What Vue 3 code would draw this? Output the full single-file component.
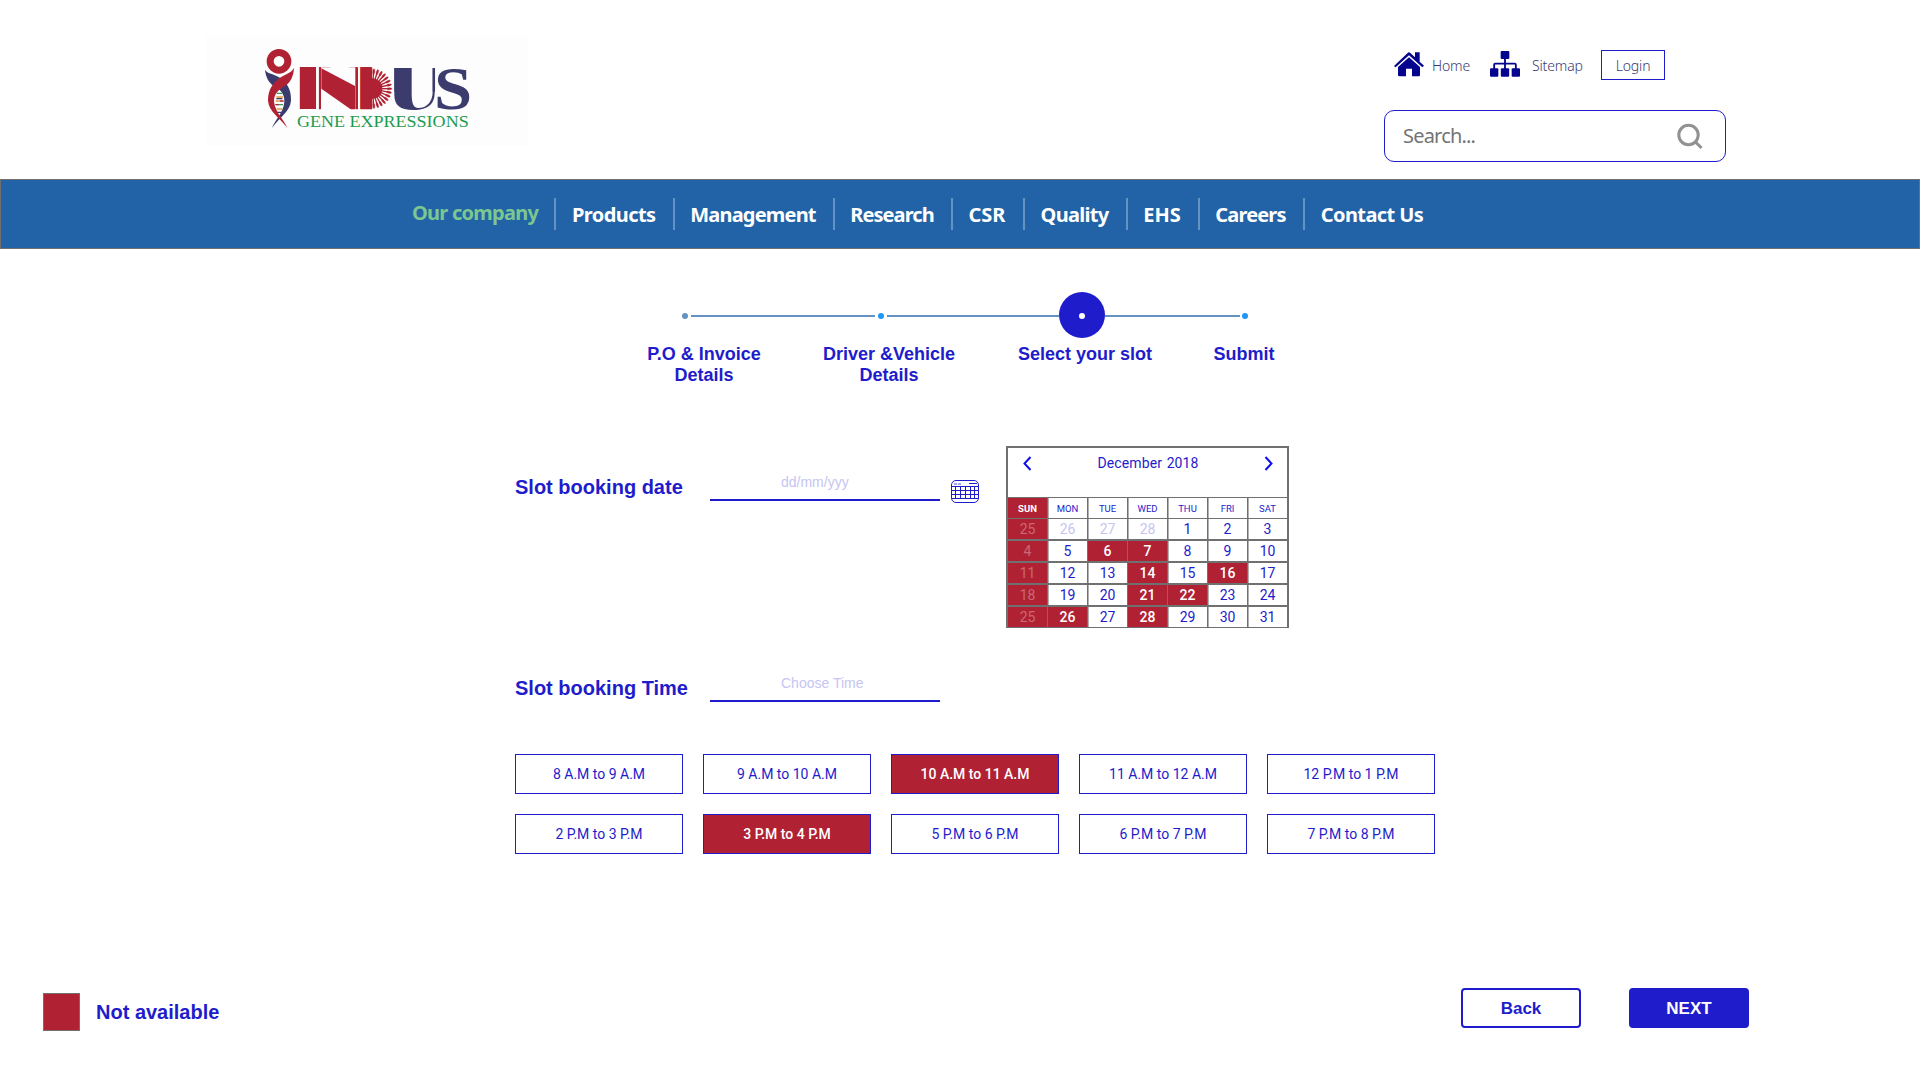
<script setup>
const rays = Array.from({ length: 15 }, (_, i) => -84 + i * 12)

const navItems = [
  { label: 'Products', width: 117.5, spacing: -0.56 },
  { label: 'Management', width: 159, spacing: -0.8 },
  { label: 'Research', width: 117, spacing: -0.9 },
  { label: 'CSR', width: 71, spacing: 0 },
  { label: 'Quality', width: 102, spacing: -0.7 },
  { label: 'EHS', width: 71, spacing: 0 },
  { label: 'Careers', width: 104, spacing: -0.85 },
  { label: 'Contact Us', width: 137, spacing: -0.6 },
]

const weekdays = ['SUN', 'MON', 'TUE', 'WED', 'THU', 'FRI', 'SAT']
const weeks = [
  [25, 26, 27, 28, 1, 2, 3],
  [4, 5, 6, 7, 8, 9, 10],
  [11, 12, 13, 14, 15, 16, 17],
  [18, 19, 20, 21, 22, 23, 24],
  [25, 26, 27, 28, 29, 30, 31],
]
const booked = [[], [2, 3], [3, 5], [3, 4], [1, 3]]

const dayClass = (row, col) => ({
  sunday: col === 0,
  booked: booked[row].includes(col),
  outside: row === 0 && col > 0 && col < 4,
})

const slots = [
  { label: '8 A.M to 9 A.M' },
  { label: '9 A.M to 10 A.M' },
  { label: '10 A.M to 11 A.M', taken: true },
  { label: '11 A.M to 12 A.M' },
  { label: '12 P.M to 1 P.M' },
  { label: '2 P.M to 3 P.M' },
  { label: '3 P.M to 4 P.M', taken: true },
  { label: '5 P.M to 6 P.M' },
  { label: '6 P.M to 7 P.M' },
  { label: '7 P.M to 8 P.M' },
]
</script>

<template>
  <div class="page">
    <header class="header">
      <svg class="logo" viewBox="18 18 966 330">
        <circle cx="237" cy="94" r="26.5" fill="none" stroke="#b02233" stroke-width="21" />
        <path fill="#3b3b6e" d="M195 119C205 135 228 130 245 148C268 165 274 190 273 212C270 245 238 262 216 294C225 268 250 250 253 215C254 190 240 178 222 168C205 158 197 140 195 119Z" />
        <path fill="#b02233" d="M282 113C274 132 250 132 232 150C210 168 204 190 204 212C207 245 238 262 262 294C252 268 227 250 222 215C222 190 236 180 254 168C272 158 281 138 282 113Z" />
        <g stroke-width="4">
          <path stroke="#3b9a5a" d="M230 190H247M229 224H249" />
          <path stroke="#e39a3b" d="M229 201H249M227 213H240M230 237H247" />
          <path stroke="#b02233" d="M240 213H251M226 224H236" />
          <path stroke="#3b3b6e" d="M232 247H244M229 206H247" />
        </g>
        <g class="mark-red">
          <text transform="translate(276.500 238) scale(1.86 1)">I</text>
          <text transform="translate(343.500 238) scale(1.085 1)">N</text>
          <text transform="translate(474 238) scale(.56 1)">D</text>
        </g>
        <path d="M363 112H466V240H363Z" fill="#fdfdfd" />
        <path d="M364 115L465 168V238H452L364 176Z" fill="#b02233" />
        <path d="M357 113H362V238H357ZM468 113H474V238H468ZM482 113H516V238H482Z" fill="#b02233" />
        <path d="M517 108H552V244H517Z" fill="#fdfdfd" />
        <path d="M516 145A31 31 0 0 1 516 207Z" fill="#b02233" />
        <g stroke="#b02233" fill="#b02233">
          <g v-for="a in rays" :key="a" :transform="`rotate(${a} 516 176)`">
            <path d="M540 176H570" stroke-width="4" />
            <ellipse cx="568" cy="176" rx="8" ry="3" />
          </g>
        </g>
        <g class="mark-blue">
          <text transform="translate(570.500 237) scale(1.13 1)">U</text>
          <path d="M578 185H710V244H578ZM635 108H698V200H635Z" fill="#fdfdfd" />
          <path d="M583 114H635V190C635 225 642 234 655 234C680 234 698 215 698 185V114H704V188C704 218 688 240 640 240C600 240 583 225 583 195Z" />
          <text class="serif" transform="translate(702 236) scale(1.1 1)">S</text>
        </g>
        <text class="tagline" x="291" y="292" textLength="515" lengthAdjust="spacingAndGlyphs">GENE EXPRESSIONS</text>
      </svg>

      <div class="tools">
        <div class="links">
          <a class="link home">
            <svg width="30" height="25" viewBox="72 50 90 75" fill="#04048e">
              <path d="M72 92L113 53Q117 49 121 53L135 66V51H149V79L162 91L157 96L117 60L77 96Z" />
              <path d="M117 66L150 95V120Q150 123 147 123H126V100H108V123H88Q84 123 84 119V95Z" />
            </svg>
            <span>Home</span>
          </a>
          <a class="link sitemap">
            <svg width="30" height="26" viewBox="360 48 90 78" fill="#04048e">
              <rect x="392" y="48" width="26" height="24" rx="3" />
              <rect x="360" y="100" width="25" height="25" rx="3" />
              <rect x="392.500" y="100" width="25" height="25" rx="3" />
              <rect x="425" y="100" width="25" height="25" rx="3" />
              <path d="M372.500 102V89Q372.500 86 375.500 86H434.500Q437.500 86 437.500 89V102M405 70V102" fill="none" stroke="#04048e" stroke-width="5.500" />
            </svg>
            <span>Sitemap</span>
          </a>
          <a class="login">Login</a>
        </div>
        <div class="search">
          <span>Search...</span>
          <svg width="26" height="27" viewBox="0 0 26 27" fill="none" stroke="#919191" stroke-width="3">
            <circle cx="11.500" cy="12" r="9.700" />
            <path d="M18 18.500L24.500 25" />
          </svg>
        </div>
      </div>
    </header>

    <nav class="nav">
      <a class="active">Our company</a>
      <a
        v-for="n in navItems"
        :key="n.label"
        :style="{ width: n.width + 'px', letterSpacing: n.spacing + 'px' }"
      >{{ n.label }}</a>
    </nav>

    <main>
      <section class="steps">
        <div class="track">
          <i class="dot muted"></i>
          <i class="bar first"></i>
          <i class="dot"></i>
          <i class="bar second"></i>
          <i class="current"><i class="dot white"></i></i>
          <i class="bar third"></i>
          <i class="dot"></i>
        </div>
        <div class="labels">
          <span class="l1">P.O &amp; Invoice<br />Details</span>
          <span class="l2">Driver &amp;Vehicle<br />Details</span>
          <span class="l3">Select your slot</span>
          <span class="l4">Submit</span>
        </div>
      </section>

      <section class="date-row">
        <label class="date-label">Slot booking date</label>
        <div class="field date-field"><span>dd/mm/yyy</span></div>
        <svg class="cal-icon" width="28" height="23" viewBox="0 0 28 23" fill="none" stroke="#1e1ccb">
          <rect x=".5" y=".5" width="27" height="22" rx="4.500" />
          <path d="M1 6.500H27M1 10.500H27M1 14.500H27M1 18.500H27M4.500 6V18M9.500 6V18M14.500 6V18M19.500 6V18M23.500 6V18M18 3.500H26" />
          <path d="M3 4H6M7 4H10" stroke="#a5a4ea" stroke-width="2" />
        </svg>
        <div class="calendar">
          <div class="cal-head">
            <svg width="9" height="15" viewBox="0 0 9 15"><path d="M7.500 1L1.500 7.500L7.500 14" /></svg>
            <span>December 2018</span>
            <svg width="9" height="15" viewBox="0 0 9 15"><path d="M1.500 1L7.500 7.500L1.500 14" /></svg>
          </div>
          <div class="week names">
            <span v-for="(d, c) in weekdays" :key="d" :class="{ sun: c === 0 }">{{ d }}</span>
          </div>
          <div v-for="(w, r) in weeks" :key="r" class="week">
            <span v-for="(d, c) in w" :key="c" :class="dayClass(r, c)">{{ d }}</span>
          </div>
        </div>
      </section>

      <section class="time-row">
        <label class="time-label">Slot booking Time</label>
        <div class="field time-field"><span>Choose Time</span></div>
      </section>

      <section class="slots">
        <div v-for="s in slots" :key="s.label" class="slot" :class="{ taken: s.taken }">{{ s.label }}</div>
      </section>
    </main>

    <footer class="footer">
      <i class="swatch"></i>
      <span class="legend">Not available</span>
      <button class="btn back">Back</button>
      <button class="btn next">NEXT</button>
    </footer>
  </div>
</template>

<style>
body {
  margin: 0;
  background: #fff;
}
</style>

<style scoped>
* {
  box-sizing: border-box;
}
.page {
  width: 1920px;
  height: 1080px;
  overflow: hidden;
  background: #fff;
  color: #1e1ccb;
  font-family: "Liberation Sans", Arial, sans-serif;
  white-space: nowrap;
}
.header {
  height: 179px;
  padding: 36px 194px 0 206px;
  display: flex;
  justify-content: space-between;
}
.logo {
  width: 322px;
  height: 110px;
  background: #fdfdfd;
}
.mark-red {
  fill: #b02233;
  font: bold 182px "Liberation Sans", sans-serif;
}
.mark-blue {
  fill: #3b3b6e;
  font: bold 180px "Liberation Sans", sans-serif;
}
.serif {
  font: bold 187px "Liberation Serif", serif;
}
.tagline {
  fill: #1d9b4e;
  font: 52px "Liberation Serif", serif;
}
.tools {
  width: 342px;
  margin-top: 14px;
  font-family: "Noto Sans", sans-serif;
}
.links {
  height: 30px;
  display: flex;
  padding-left: 10px;
  color: #3b3a72;
  font-size: 14px;
  font-weight: 300;
  line-height: 31px;
  letter-spacing: -.15px;
}
.link {
  display: flex;
}
.link svg {
  margin-top: 1px;
  flex: none;
}
.home {
  width: 96px;
}
.home svg {
  margin-top: 2px;
}
.home span {
  margin-left: 8px;
}
.sitemap {
  width: 111px;
}
.sitemap span {
  margin-left: 12px;
}
.login {
  width: 64px;
  border: 1px solid #1e1ccb;
  text-align: center;
  line-height: 29px;
}
.search {
  margin-top: 30px;
  height: 52px;
  border: 1px solid #1e1ccb;
  border-radius: 10px;
  display: flex;
  justify-content: space-between;
  padding: 0 22px 0 18px;
  color: #747474;
  font-size: 20px;
  line-height: 50px;
  letter-spacing: -.8px;
}
.search svg {
  margin-top: 12px;
}
.nav {
  height: 70px;
  background: #2263a7;
  border: 1px solid #707070;
  padding: 18px 0 0 409px;
  display: flex;
  font: bold 20px/32px "Noto Sans", sans-serif;
  color: #fff;
}
.nav a {
  height: 32px;
  padding-top: 3px;
  border-left: 2px solid #6392c3;
  text-align: center;
  margin-right: 1px;
  flex: none;
  line-height: 28px;
}
.nav .active {
  width: 143px;
  border: 0;
  text-align: left;
  padding: 1px 0 0 2px;
  color: #7cc690;
  letter-spacing: -.75px;
}
.steps {
  padding: 43px 0 0 682px;
  height: 197px;
}
.track {
  display: flex;
  align-items: center;
  height: 46px;
  padding-top: 1px;
}
.track i {
  display: block;
  flex: none;
}
.dot {
  width: 6px;
  height: 6px;
  border-radius: 50%;
  background: #2196f3;
}
.dot.muted {
  background: #6392c3;
}
.dot.white {
  background: #fff;
}
.bar {
  height: 2px;
  background: #6392c3;
}
.first {
  width: 184px;
  margin: 0 3px;
}
.second {
  width: 172px;
  margin-left: 3px;
}
.third {
  width: 135px;
  margin-right: 2px;
}
.current {
  width: 46px;
  height: 46px;
  border-radius: 50%;
  background: #1e1ccb;
  padding: 21px 20px;
  margin-top: -1px;
}
.labels {
  display: flex;
  margin: 5px 0 0 -53px;
  font-weight: bold;
  font-size: 18px;
  line-height: 21px;
  text-align: center;
}
.labels span {
  padding-top: 1px;
}
.l1 {
  width: 150px;
}
.l2 {
  width: 220px;
}
.l3 {
  width: 172px;
}
.l4 {
  width: 146px;
}
.date-row {
  height: 183px;
  padding-left: 515px;
  display: flex;
}
.date-label,
.time-label {
  width: 195px;
  font-weight: bold;
  font-size: 20px;
  line-height: 24px;
}
.date-label {
  padding-top: 29px;
}
.field {
  width: 230px;
  border-bottom: 2px solid #1e1ccb;
  color: #c6c5f1;
  font-size: 14px;
  line-height: 16px;
  padding-left: 71px;
}
.date-field {
  height: 55px;
  padding-top: 28px;
}
.cal-icon {
  margin: 34px 0 0 11px;
}
.calendar {
  margin-left: 27px;
  width: 283px;
  height: 182px;
  border: 2px solid #707070;
  border-bottom-width: 1px;
  font-family: Roboto, sans-serif;
  background: #707070;
  display: flex;
  flex-direction: column;
  gap: 2px;
}
.cal-head {
  height: 49px;
  margin-bottom: -1px;
  background: #fff;
  display: flex;
  justify-content: space-between;
  padding: 7px 14px 0 15px;
  font-size: 14px;
  line-height: 16px;
  letter-spacing: .12px;
  word-spacing: 1px;
}
.cal-head svg {
  margin-top: 1px;
  fill: none;
  stroke: #1010ee;
  stroke-width: 2;
}
.week {
  display: grid;
  grid-template-columns: repeat(7, 39px);
  gap: 1px;
  height: 20px;
  width: 279px;
  font-size: 14px;
  line-height: 20px;
  text-align: center;
}
.week span {
  background: #fff;
  box-shadow: 1px 0 #b0b0b0 inset;
}
.names {
  margin-bottom: -1px;
  font-size: 9.5px;
  line-height: 22px;
}
.week .sun,
.week .booked {
  background: #b02233;
  color: #fff;
  font-weight: 500;
  box-shadow: none;
}
.week .sun {
  font-weight: 700;
}
.week .sunday {
  background: #b02233;
  color: #ca6873;
  box-shadow: none;
}
.week .outside {
  color: #c6c5f1;
}
.names span {
  height: 20px;
}
.time-row {
  display: flex;
  height: 125px;
  padding-left: 515px;
}
.time-label {
  padding-top: 47px;
}
.time-field {
  height: 73px;
  padding-top: 46px;
}
.slots {
  padding-left: 515px;
  display: grid;
  grid-template-columns: repeat(5, 168px);
  gap: 20px;
}
.slot {
  height: 40px;
  border: 1px solid #1e1ccb;
  text-align: center;
  font: 14px/38px Roboto, sans-serif;
}
.taken {
  background: #b02233;
  color: #fff;
  font-weight: 500;
}
.footer {
  display: flex;
  padding: 134px 0 0 43px;
}
.swatch {
  width: 37px;
  height: 38px;
  margin-top: 5px;
  border: 1px solid #707070;
  background: #b02233;
}
.legend {
  width: 1365px;
  margin-left: 16px;
  padding-top: 12px;
  font-weight: bold;
  font-size: 20px;
  line-height: 24px;
}
.btn {
  width: 120px;
  height: 40px;
  border: 2px solid #1e1ccb;
  border-radius: 4px;
  background: #fff;
  color: #1e1ccb;
  padding: 1px 0 0;
  font: bold 17px/35px "Liberation Sans", sans-serif;
}
.next {
  margin-left: 48px;
  background: #1e1ccb;
  color: #fff;
}
</style>
